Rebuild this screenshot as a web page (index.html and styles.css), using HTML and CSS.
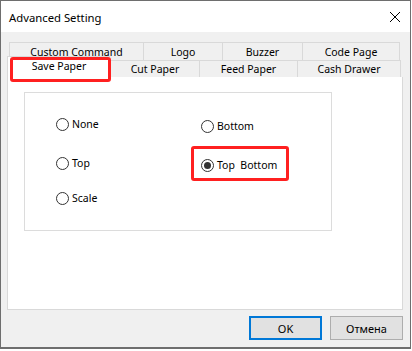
FILE: index.html
```html
<!DOCTYPE html>
<html lang="en">
<head>
    <meta charset="UTF-8">
    <meta name="viewport" content="width=device-width, initial-scale=1.0">
    <title>Advanced Setting</title>
    <link rel="stylesheet" href="styles.css">
</head>
<body>

<div class="window">
    <!-- Title bar -->
    <div class="title-bar">
        <span class="title">Advanced Setting</span>
        <svg class="close" width="12" height="12" viewBox="0 0 12 12">
            <path d="M1 1 L11 11 M11 1 L1 11" stroke="#000" stroke-width="1" fill="none"/>
        </svg>
    </div>

    <div class="body">
        <!-- Tabs -->
        <div class="tabs">
            <div class="tab-row back">
                <div class="tab w-custom">Custom Command</div>
                <div class="tab w-logo">Logo</div>
                <div class="tab w-buzzer">Buzzer</div>
                <div class="tab w-code">Code Page</div>
            </div>
            <div class="tab-row front">
                <div class="tab w-save selected">Save Paper<span class="mark mark-tab"></span></div>
                <div class="tab w-cut">Cut Paper</div>
                <div class="tab w-feed">Feed Paper</div>
                <div class="tab w-cash">Cash Drawer</div>
            </div>
        </div>

        <!-- Tab page -->
        <div class="panel">
            <div class="group">
                <div class="col col-left">
                    <label class="radio r-none"><span class="circle"></span>None</label>
                    <label class="radio r-top"><span class="circle"></span>Top</label>
                    <label class="radio r-scale"><span class="circle"></span>Scale</label>
                </div>
                <div class="col col-right">
                    <label class="radio r-bottom"><span class="circle"></span>Bottom</label>
                    <label class="radio r-topbottom"><span class="circle checked"></span>Top&nbsp; Bottom<span class="mark mark-radio"></span></label>
                </div>
            </div>
        </div>

        <!-- Buttons -->
        <div class="buttons">
            <button class="btn default">OK</button>
            <button class="btn">Отмена</button>
        </div>
    </div>
</div>

</body>
</html>
```

FILE: styles.css
```css
body {
    margin: 0;
    padding: 0;
    background-color: #fff;
    font-family: "Noto Sans", sans-serif;
    font-size: 10.5px;
    color: #000;
}

.window {
    box-sizing: border-box;
    width: 411px;
    height: 349px;
    border: 1px solid #6e6e6e;
    border-bottom: 2px solid #6e6e6e;
    background-color: #f0f0f0;
    display: flex;
    flex-direction: column;
}

/* Title bar */
.title-bar {
    flex-shrink: 0;
    height: 31px;
    background-color: #fff;
    display: flex;
    align-items: center;
    justify-content: space-between;
    padding: 0 9px 0 8px;
}
.title {
    font-size: 11.3px;
    margin-top: 1px;
}
.close {
    margin-top: 1px;
}

.body {
    flex: 1;
    padding: 10px 7px 0 6px;
}

/* Tabs */
.tabs {
    display: flex;
    flex-direction: column;
}
.tab-row {
    display: flex;
    height: 18px;
}
.tab-row.back {
    margin-left: 2px;
}
.tab-row.front {
    height: 17px;
}
.tab {
    box-sizing: border-box;
    border: 1px solid #d9d9d9;
    border-bottom: none;
    border-right: none;
    display: flex;
    align-items: center;
    justify-content: center;
    line-height: 1;
    padding-top: 1px;
}
.tab:last-child {
    border-right: 1px solid #d9d9d9;
}
.tab.selected {
    position: relative;
    background-color: #fff;
    height: 21px;
    margin-top: -4px;
    padding: 0 0 2px 0;
    z-index: 2;
}

.w-custom { width: 134px; }
.w-logo { width: 79px; }
.w-buzzer { width: 80px; }
.w-code { width: 98px; }
.w-save { width: 103px; }
.w-cut { width: 89px; }
.w-feed { width: 98px; }
.w-cash { width: 104px; }

/* Red annotation marks */
.mark {
    position: absolute;
    border: 3px solid #ff2020;
    border-radius: 3px;
    pointer-events: none;
}
.mark-tab {
    left: 2px;
    top: 0;
    width: 95px;
    height: 19px;
}
.mark-radio {
    left: -10px;
    top: -12px;
    width: 92px;
    height: 29px;
}

/* Tab page */
.panel {
    box-sizing: border-box;
    flex-shrink: 0;
    height: 233px;
    background-color: #fff;
    border: 1px solid #d9d9d9;
    border-top: none;
    padding: 15px 0 0 16px;
    position: relative;
    z-index: 1;
}
.group {
    box-sizing: border-box;
    width: 308px;
    height: 139px;
    border: 1px solid #dcdcdc;
    display: flex;
}
.col {
    display: flex;
    flex-direction: column;
}
.col-left {
    padding-left: 31px;
    width: 145px;
}

.radio {
    display: flex;
    align-items: center;
    height: 14px;
    gap: 3px;
    position: relative;
    font-size: 10.5px;
}
.r-none { margin-top: 24px; }
.r-top { margin-top: 25px; }
.r-scale { margin-top: 21px; }
.r-bottom { margin-top: 26px; }
.r-topbottom { margin-top: 25px; }

.circle {
    box-sizing: border-box;
    width: 13px;
    height: 13px;
    border: 1px solid #333;
    border-radius: 50%;
    background-color: #fff;
    display: flex;
    align-items: center;
    justify-content: center;
}
.circle.checked::after {
    content: "";
    width: 7px;
    height: 7px;
    border-radius: 50%;
    background-color: #333;
}

/* Buttons */
.buttons {
    display: flex;
    justify-content: flex-end;
    gap: 8px;
    padding: 6px 0 0 0;
}
.btn {
    box-sizing: border-box;
    width: 73px;
    height: 24px;
    font-family: "Noto Sans", sans-serif;
    font-size: 11px;
    color: #000;
    background-color: #e1e1e1;
    border: 1px solid #adadad;
    padding: 0;
}
.btn.default {
    border: 2px solid #0078d7;
}
```
